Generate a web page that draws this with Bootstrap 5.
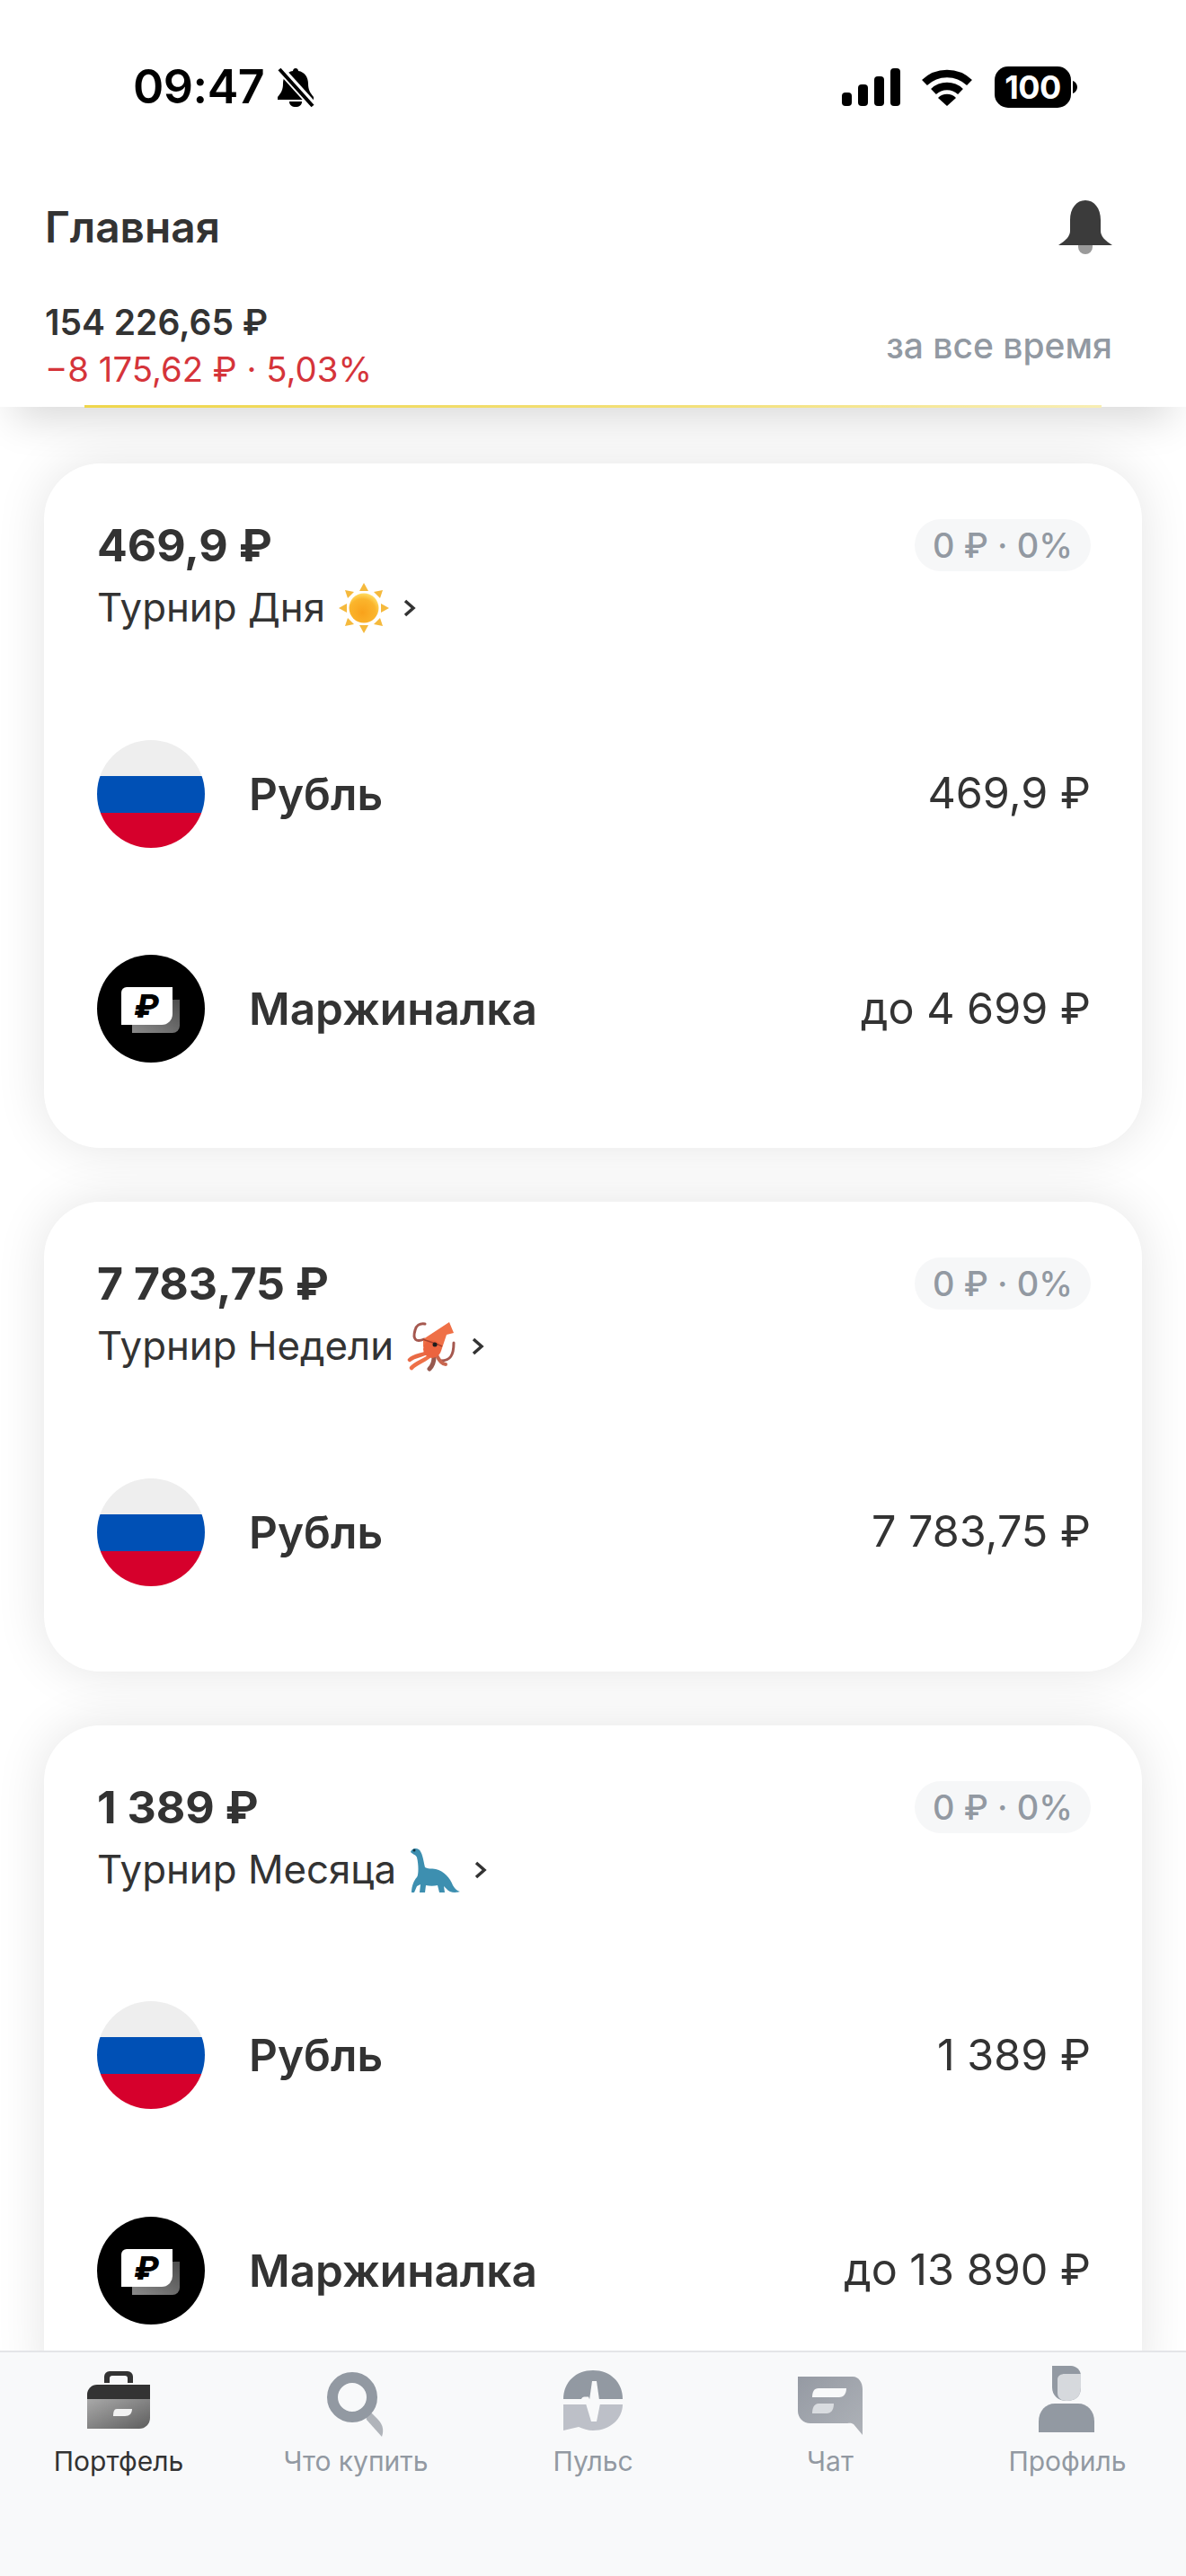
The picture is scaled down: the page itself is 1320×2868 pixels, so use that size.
<!DOCTYPE html>
<html lang="ru">
<head>
    <meta charset="UTF-8">
    <meta name="viewport" content="width=device-width, initial-scale=1.0">
    <title>Главная</title>
    <link href="https://cdn.jsdelivr.net/npm/bootstrap@5.3.0/dist/css/bootstrap.min.css" rel="stylesheet">
    <style>
        html, body {
            height: 2868px;
            overflow: hidden;
        }
        body {
            background: #fff;
            font-family: Inter, "Liberation Sans", sans-serif;
            color: #333;
        }
        .app-header {
            height: 453px;
            background: #fff;
            padding: 0 84px 0 50px;
            box-shadow: 0 28px 44px -16px rgba(0, 0, 0, .16);
            z-index: 2;
        }
        .app-header::after {
            content: "";
            position: absolute;
            left: 94px;
            right: 94px;
            bottom: -1px;
            height: 3px;
            background: linear-gradient(90deg, #efd64c, #f3e07a 60%, #f8eeb4);
        }
        .status-row {
            height: 78px;
            padding: 58px 0 0 98px;
            margin-right: 37px;
            box-sizing: content-box;
        }
        .status-time {
            font-size: 52px;
            font-weight: 600;
            line-height: 78px;
            color: #000;
            letter-spacing: -.5px;
        }
        .status-mute {
            margin-left: 13px;
        }
        .signal-icon {
            margin-right: 22px;
        }
        .title-row {
            margin-top: 81px;
            height: 72px;
            margin-right: -2px;
        }
        .page-title {
            font-size: 47.800px;
            font-weight: 600;
            line-height: 72px;
            margin: 0;
        }
        .summary-row {
            margin-top: 44px;
            margin-right: -2px;
        }
        .total-sum {
            font-size: 39px;
            font-weight: 600;
            line-height: 52px;
        }
        .total-diff {
            font-size: 38.300px;
            line-height: 52px;
            color: #d5343a;
        }
        .period-label {
            font-size: 39px;
            font-weight: 500;
            color: #9299a2;
            line-height: 52px;
        }
        .cards-wrap {
            padding: 63px 49px 0;
            gap: 60px;
        }
        .tour-card {
            border: 0;
            border-radius: 62px;
            background: #fff;
            box-shadow: 0 0 56px rgba(0, 0, 0, .11);
            padding: 0 57px 35px 59px;
        }
        .tour-top {
            height: 248px;
            padding-top: 61px;
        }
        .tour-sum {
            font-size: 50px;
            font-weight: 700;
            line-height: 60px;
        }
        .tour-name {
            font-size: 43.800px;
            line-height: 56px;
            margin-top: 12px;
            gap: 15px;
        }
        .tour-arrow {
            margin-left: 1px;
        }
        .yield-pill {
            height: 58px;
            margin-top: 1px;
            padding: 0 20px;
            border-radius: 29px;
            background: #f6f7f8;
            color: #9299a2;
            font-size: 38px;
            line-height: 58px;
            font-weight: 500;
        }
        .asset-row {
            height: 239.500px;
        }
        .asset-icon {
            width: 120px;
            height: 120px;
            flex: none;
        }
        .asset-name {
            font-size: 49.500px;
            font-weight: 560;
            margin-left: 49px;
        }
        .asset-sum {
            font-size: 48.500px;
        }
        .tab-bar {
            height: 251px;
            padding: 15px 0 0 0;
            border-top: 2px solid #e4e5e8;
            z-index: 3;
        }
        .tab-item {
            width: 264px;
            color: #9299a2;
            font-size: 30px;
        }
        .tab-item.is-active {
            color: #333;
        }
        .tab-item svg {
            display: block;
            width: 100px;
            height: 90px;
        }
        .tab-label {
            margin-top: -4px;
            line-height: 40px;
        }
    </style>
</head>
<body>
    <svg width="0" height="0" class="position-absolute">
        <defs>
            <linearGradient id="gradCase" x1="0" y1="0" x2="1" y2="1">
                <stop offset="0" stop-color="#a9a9a9"/>
                <stop offset="1" stop-color="#5e5e5e"/>
            </linearGradient>
            <linearGradient id="gradBack" x1="0" y1="1" x2="1" y2="0">
                <stop offset="0" stop-color="#8a8a8a"/>
                <stop offset="1" stop-color="#4d4d4d"/>
            </linearGradient>
            <linearGradient id="gradChat" x1="0" y1="0" x2="1" y2="1">
                <stop offset="0" stop-color="#959aa3"/>
                <stop offset="1" stop-color="#aeb2b8"/>
            </linearGradient>
            <radialGradient id="gradSun" cx=".45" cy=".65" r=".65">
                <stop offset="0" stop-color="#f9a21b"/>
                <stop offset=".7" stop-color="#fbb52c"/>
                <stop offset="1" stop-color="#ffdc62"/>
            </radialGradient>
            <symbol id="flagRu" viewBox="0 0 120 120">
                <clipPath id="clipFlag"><circle cx="60" cy="60" r="60"/></clipPath>
                <g clip-path="url(#clipFlag)">
                    <rect width="120" height="40" fill="#eeeeee"/>
                    <rect y="40" width="120" height="41" fill="#0050b5"/>
                    <rect y="81" width="120" height="39" fill="#d6002c"/>
                </g>
            </symbol>
            <symbol id="marginBadge" viewBox="0 0 120 120">
                <circle cx="60" cy="60" r="60" fill="#000"/>
                <path d="M39 50H92V79a8 8 0 0 1-8 8H39Z" fill="url(#gradBack)"/>
                <path d="M33 36H84V66a12 12 0 0 1-12 12H27V42a6 6 0 0 1 6-6Z" fill="#fff"/>
                <text x="55" y="70" text-anchor="middle" font-family="Inter, sans-serif" font-weight="800" font-style="italic" font-size="36" fill="#000">₽</text>
            </symbol>
        </defs>
    </svg>

    <header class="app-header position-relative">
        <div class="status-row d-flex justify-content-between align-items-center">
            <div class="d-flex align-items-center">
                <span class="status-time">09:47</span>
                <svg width="44" height="46" viewBox="0 0 44 46" class="status-mute">
                    <path d="M22 2c2 0 3 1.500 3 3 7 1 11 7 11 14 0 7 2 10 6 15v3H2v-3c4-5 6-8 6-15 0-7 4-13 11-14 0-1.500 1-3 3-3Z" fill="#000"/>
                    <path d="M15 39h14c0 4-3 6-7 6s-7-2-7-6Z" fill="#000"/>
                    <path d="M4 2 42 44" stroke="#fff" stroke-width="9"/>
                    <path d="M4 3 41 44" stroke="#000" stroke-width="4"/>
                </svg>
            </div>
            <div class="d-flex align-items-center">
                <svg width="66" height="42" viewBox="0 0 66 42" class="signal-icon">
                    <rect x="0" y="27" width="11" height="15" rx="4" fill="#000"/>
                    <rect x="18" y="18" width="11" height="24" rx="4" fill="#000"/>
                    <rect x="36" y="9" width="11" height="33" rx="4" fill="#000"/>
                    <rect x="54" y="0" width="11" height="42" rx="4" fill="#000"/>
                </svg>
                <svg width="58" height="42" viewBox="0 0 58 42">
                    <path d="M4 16a36 36 0 0 1 50 0" fill="none" stroke="#000" stroke-width="8.500"/>
                    <path d="M14 26a22 22 0 0 1 30 0" fill="none" stroke="#000" stroke-width="8.500"/>
                    <path d="M19 33a14 14 0 0 1 20 0L29 42Z" fill="#000"/>
                </svg>
                <svg width="92" height="46" viewBox="0 0 92 46" class="ms-4">
                    <rect x="0" y="0" width="85" height="46" rx="15" fill="#000"/>
                    <path d="M87 16c3 1 5 4 5 7s-2 6-5 7Z" fill="#000"/>
                    <text x="42.500" y="36" text-anchor="middle" font-family="Inter, sans-serif" font-weight="700" font-size="36" letter-spacing="-.5" fill="#fff">100</text>
                </svg>
            </div>
        </div>
        <div class="title-row d-flex justify-content-between align-items-center">
            <h1 class="page-title">Главная</h1>
            <svg width="60" height="60" viewBox="0 0 60 60">
                <path d="M22 50h16v2a8 8 0 0 1-16 0Z" fill="#9a9a9a"/>
                <path d="M30 0c10 0 17 9 17 22v12c0 6 5 11 13 16H0c8-5 13-10 13-16V22C13 9 20 0 30 0Z" fill="#3b3b3b"/>
            </svg>
        </div>
        <div class="summary-row d-flex justify-content-between align-items-center">
            <div>
                <div class="total-sum">154 226,65 ₽</div>
                <div class="total-diff">−8 175,62 ₽ · 5,03%</div>
            </div>
            <div class="period-label">за все время</div>
        </div>
    </header>

    <main class="cards-wrap d-flex flex-column">
        <section class="card tour-card">
            <div class="tour-top d-flex justify-content-between align-items-start">
                <div>
                    <div class="tour-sum">469,9 ₽</div>
                    <div class="tour-name d-flex align-items-center">
                        <span>Турнир Дня</span>
                        <svg width="56" height="56" viewBox="0 0 56 56">
                            <g fill="#f5b93c">
                                <path d="M28 0 33 9H23Z"/><path d="M28 56 33 47H23Z"/>
                                <path d="M0 28 9 23V33Z"/><path d="M56 28 47 23V33Z"/>
                                <path d="M7 8 17 10 10 17Z"/><path d="M49 8 39 10 46 17Z"/>
                                <path d="M7 48 17 46 10 39Z"/><path d="M49 48 39 46 46 39Z"/>
                            </g>
                            <circle cx="28" cy="28" r="16.500" fill="url(#gradSun)"/>
                        </svg>
                        <svg class="tour-arrow" width="14" height="24" viewBox="0 0 14 24"><path d="M2 4 11 12 2 20" fill="none" stroke="#333" stroke-width="3.500"/></svg>
                    </div>
                </div>
                <div class="yield-pill">0 ₽ · 0%</div>
            </div>
            <div class="asset-row d-flex align-items-center">
                <svg class="asset-icon"><use href="#flagRu"/></svg>
                <span class="asset-name">Рубль</span>
                <span class="asset-sum ms-auto">469,9 ₽</span>
            </div>
            <div class="asset-row d-flex align-items-center">
                <svg class="asset-icon"><use href="#marginBadge"/></svg>
                <span class="asset-name">Маржиналка</span>
                <span class="asset-sum ms-auto">до 4 699 ₽</span>
            </div>
        </section>

        <section class="card tour-card">
            <div class="tour-top d-flex justify-content-between align-items-start">
                <div>
                    <div class="tour-sum">7 783,75 ₽</div>
                    <div class="tour-name d-flex align-items-center">
                        <span>Турнир Недели</span>
                        <svg width="56" height="56" viewBox="0 0 56 56">
                            <g fill="none" stroke-linecap="round">
                                <path d="M19 20C10 24 6 20 9 10 10 5 14 2 20 3" stroke="#a5584f" stroke-width="3"/>
                                <path d="M38 44C48 44 52 38 52 24" stroke="#a5584f" stroke-width="3"/>
                                <path d="M30 40C30 46 28 50 25 53" stroke="#96594f" stroke-width="5"/>
                                <path d="M24 34C18 38 8 38 3 43" stroke="#e96a45" stroke-width="4.500"/>
                                <path d="M26 38C20 44 10 46 5 52" stroke="#ee7148" stroke-width="4.500"/>
                                <path d="M33 38C36 44 39 48 43 48" stroke="#c8664e" stroke-width="4"/>
                            </g>
                            <path d="M18 20 47 1 52 13 44 15 38 33C34 38 22 36 18 28Z" fill="#ef7047"/>
                            <circle cx="28" cy="31" r="10" fill="#ec643f"/>
                            <path d="M18 20C24 23 32 24 39 28" fill="none" stroke="#a8402c" stroke-width="1.500"/>
                            <circle cx="31" cy="26" r="2.500" fill="#1d1d1d"/>
                        </svg>
                        <svg class="tour-arrow" width="14" height="24" viewBox="0 0 14 24"><path d="M2 4 11 12 2 20" fill="none" stroke="#333" stroke-width="3.500"/></svg>
                    </div>
                </div>
                <div class="yield-pill">0 ₽ · 0%</div>
            </div>
            <div class="asset-row d-flex align-items-center">
                <svg class="asset-icon"><use href="#flagRu"/></svg>
                <span class="asset-name">Рубль</span>
                <span class="asset-sum ms-auto">7 783,75 ₽</span>
            </div>
        </section>

        <section class="card tour-card">
            <div class="tour-top d-flex justify-content-between align-items-start">
                <div>
                    <div class="tour-sum">1 389 ₽</div>
                    <div class="tour-name d-flex align-items-center">
                        <span>Турнир Месяца</span>
                        <svg width="56" height="56" viewBox="0 0 56 56">
                            <path d="M1 8C2 4 7 3 10 5 14 8 15 16 17 25 20 27 24 26 29 27 38 29 45 37 48 45 50 49 53 51 56 52 50 54 44 53 41 49L38 46 39 53H33L31 45C27 46 22 46 18 45L17 53H11L12 44 8 46 5 53H2C2 46 5 39 8 36 10 33 10 22 8 14 7 11 4 11 1 8Z" fill="#3d8fb0"/>
                            <circle cx="5" cy="6" r="1.500" fill="#12303c"/>
                        </svg>
                        <svg class="tour-arrow" width="14" height="24" viewBox="0 0 14 24"><path d="M2 4 11 12 2 20" fill="none" stroke="#333" stroke-width="3.500"/></svg>
                    </div>
                </div>
                <div class="yield-pill">0 ₽ · 0%</div>
            </div>
            <div class="asset-row d-flex align-items-center">
                <svg class="asset-icon"><use href="#flagRu"/></svg>
                <span class="asset-name">Рубль</span>
                <span class="asset-sum ms-auto">1 389 ₽</span>
            </div>
            <div class="asset-row d-flex align-items-center">
                <svg class="asset-icon"><use href="#marginBadge"/></svg>
                <span class="asset-name">Маржиналка</span>
                <span class="asset-sum ms-auto">до 13 890 ₽</span>
            </div>
        </section>
    </main>

    <nav class="tab-bar position-fixed bottom-0 start-0 end-0 bg-body-tertiary d-flex">
        <div class="tab-item is-active d-flex flex-column align-items-center">
            <svg viewBox="0 0 100 90">
                <path d="M34 19V12a6 6 0 0 1 6-6H60a6 6 0 0 1 6 6V19H60V14a3 3 0 0 0-3-3H43a3 3 0 0 0-3 3V19Z" fill="#333"/>
                <path d="M15 37V32A11 11 0 0 1 26 21H85V37Z" fill="#333"/>
                <path d="M15 37H85V58A12 12 0 0 1 73 70H15Z" fill="url(#gradCase)"/>
                <path d="M48 48H65C65 53 62 56 57 56H44C44 51 45 48 48 48Z" fill="#f2f2f2"/>
            </svg>
            <div class="tab-label">Портфель</div>
        </div>
        <div class="tab-item d-flex flex-column align-items-center">
            <svg viewBox="0 0 100 90">
                <path d="M60 45 74 59C79 64 82 70 79 79L62 60Z" fill="#b0b4ba"/>
                <circle cx="46" cy="35" r="22" fill="none" stroke="#9299a2" stroke-width="12"/>
            </svg>
            <div class="tab-label">Что купить</div>
        </div>
        <div class="tab-item d-flex flex-column align-items-center">
            <svg viewBox="0 0 100 90">
                <path d="M17 37C17 18 31 5 50 5 69 5 83 18 83 37Z" fill="#9299a2"/>
                <path d="M17 43H83C83 59 69 72 50 72 44 72 39 70 34 68L17 72Z" fill="#bdc0c8"/>
                <path d="M46 38 49 17H54L57 38Z" fill="#f8f9fa"/>
                <path d="M42 42H58L54 62H48Z" fill="#f8f9fa"/>
                <path d="M17 40H36C38 40 38 36 40 36H44C45 38 46 46 48 46 50 46 50 30 51 30 53 30 53 38 55 40 56 41 59 41 61 41H83" fill="none" stroke="#f8f9fa" stroke-width="3"/>
            </svg>
            <div class="tab-label">Пульс</div>
        </div>
        <div class="tab-item d-flex flex-column align-items-center">
            <svg viewBox="0 0 100 90">
                <path d="M14 12H75C82 12 86 19 86 26V77L76 65C73 63 71 64 66 64H28C20 64 14 58 14 50Z" fill="url(#gradChat)"/>
                <path d="M37 25H68C68 32 64 35 60 35H30C30 29 32 25 37 25Z" fill="#f8f9fa"/>
                <path d="M37 42H54C54 49 51 53 46 53H30C30 47 32 42 37 42Z" fill="#d9dce0"/>
            </svg>
            <div class="tab-label">Чат</div>
        </div>
        <div class="tab-item d-flex flex-column align-items-center">
            <svg viewBox="0 0 100 90">
                <path d="M33 0H54C60 0 65 5 65 11V24C65 34 59 39 49 39 40 39 33 33 33 24Z" fill="#9299a2"/>
                <path d="M39 15C39 11 43 9 47 9H65V24C65 34 59 39 49 39 43 39 39 36 39 30Z" fill="#d6d9dd"/>
                <path d="M18 74V62C18 50 26 42 36 42H62C72 42 80 50 80 62V74Z" fill="#9299a2"/>
            </svg>
            <div class="tab-label">Профиль</div>
        </div>
    </nav>
</body>
</html>
